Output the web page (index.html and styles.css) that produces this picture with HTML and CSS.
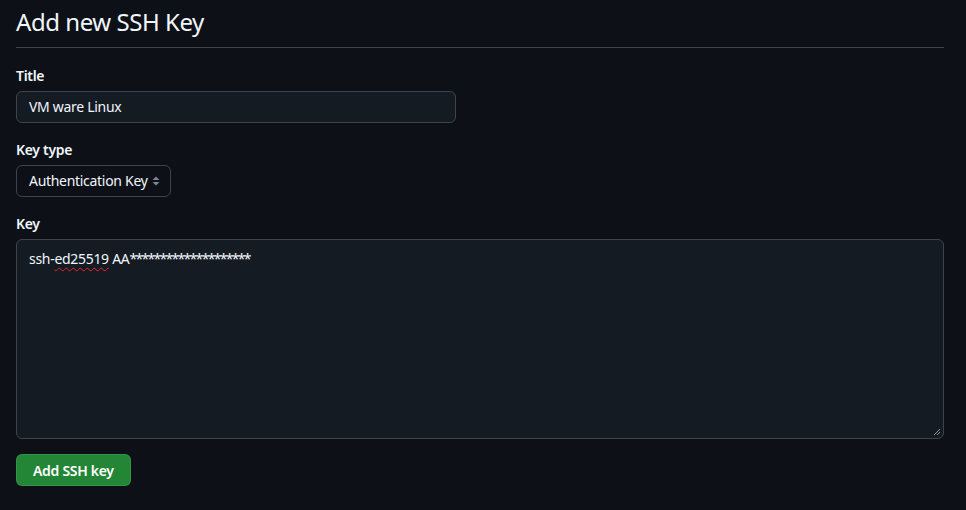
FILE: index.html
```html
<!DOCTYPE html>
<html>
<head>
<meta charset="utf-8">
<link rel="stylesheet" href="styles.css">
</head>
<body>
<div class="page">
  <h1 class="title">Add new SSH Key</h1>
  <form class="form">
    <div class="field">
      <label class="label">Title</label>
      <div class="input">VM ware Linux</div>
    </div>
    <div class="field">
      <label class="label">Key type</label>
      <div class="select">
        <span>Authentication Key</span>
        <svg class="caret" width="8" height="12" viewBox="0 0 8 12"><path d="M4 1.5 L7.5 5 H0.5 Z M4 10.5 L0.5 7 H7.5 Z" fill="#7d8590"/></svg>
      </div>
    </div>
    <div class="field field-last">
      <label class="label">Key</label>
      <div class="textarea">
        <span>ssh-<span class="spell">ed25519</span> AA<span class="stars">********************</span></span>
        <svg class="grip" width="8" height="8" viewBox="0 0 8 8"><path d="M7 1 L1 7 M7 4 L4 7" stroke="#9198a1" stroke-width="1"/></svg>
      </div>
    </div>
    <div class="actions">
      <button type="button" class="btn">Add SSH key</button>
    </div>
  </form>
</div>
</body>
</html>
```
FILE: styles.css
```css
html, body {
  margin: 0;
  background: #0d1117;
}
body {
  padding: 0 22px 0 16px;
  font-family: "Noto Sans", "Open Sans", sans-serif;
  color: #f0f6fc;
  font-size: 14px;
  letter-spacing: -0.3px;
}
.page {
  width: 928px;
}
.title {
  margin: 0;
  font-weight: 400;
  font-size: 24px;
  line-height: 36px;
  letter-spacing: -0.45px;
  padding-top: 4px;
  padding-bottom: 7px;
  border-bottom: 1px solid #3d444d;
}
.form {
  padding-top: 18px;
}
.field {
  display: flex;
  flex-direction: column;
  margin-bottom: 17px;
}
.field-last {
  margin-bottom: 15px;
}
.label {
  font-weight: 600;
  font-size: 14px;
  line-height: 20px;
  margin-bottom: 5px;
}
.input, .select, .textarea {
  box-sizing: border-box;
  background: #151b23;
  border: 1px solid #3d444d;
  border-radius: 6px;
  color: #f0f6fc;
  font-size: 14px;
}
.input {
  width: 440px;
  height: 32px;
  line-height: 30px;
  padding: 0 12px;
}
.select {
  width: 155px;
  height: 32px;
  line-height: 30px;
  padding: 0 10px 0 12px;
  display: flex;
  align-items: center;
  justify-content: space-between;
  background: #0d1117;
}
.textarea {
  position: relative;
  width: 928px;
  height: 200px;
  padding: 9px 12px;
  line-height: 20px;
}
.spell {
  text-decoration: underline wavy #e5222f;
  text-decoration-thickness: 1px;
  text-underline-offset: 3px;
}
.stars {
  letter-spacing: -1.7px;
}
.grip {
  position: absolute;
  right: 2px;
  bottom: 2px;
}
.btn {
  display: block;
  height: 32px;
  padding: 0 16px;
  background: #238636;
  border: 1px solid rgba(240,246,252,0.1);
  border-radius: 6px;
  color: #ffffff;
  font-family: "Noto Sans", "Open Sans", sans-serif;
  font-weight: 600;
  font-size: 14px;
  letter-spacing: -0.3px;
}
```
